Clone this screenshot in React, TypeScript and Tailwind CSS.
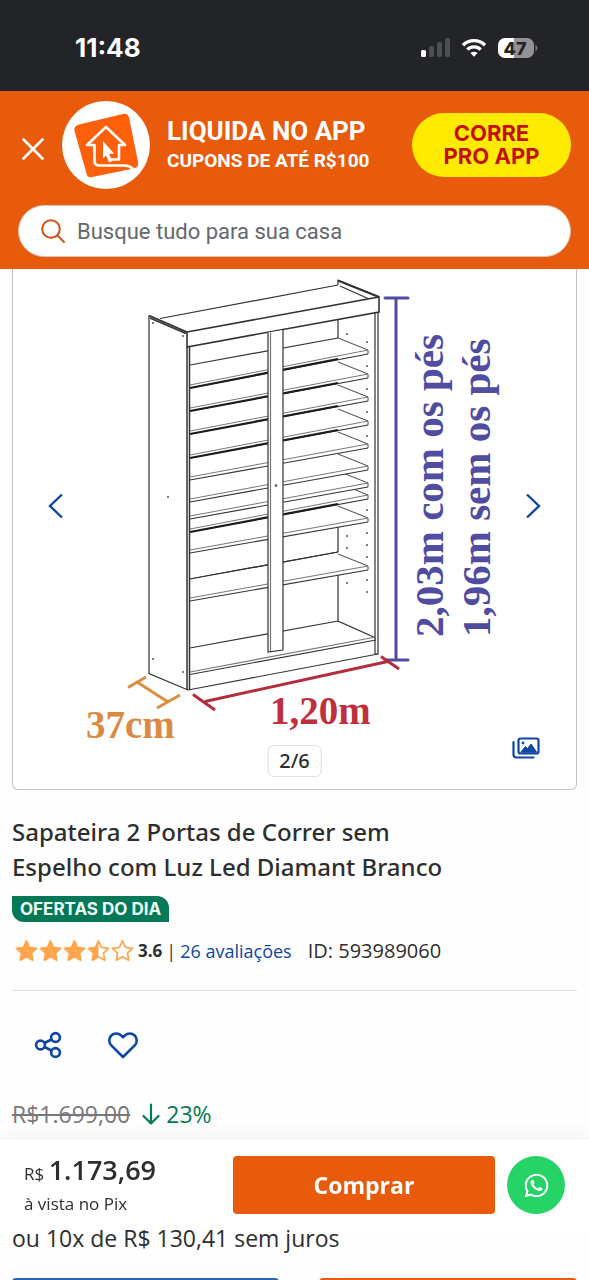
import React, { useState } from 'react';
import { FaWhatsapp } from 'react-icons/fa';

interface Shelf {
  right: number;
  left: number;
  dark?: boolean;
}

// y of the front edge's lower line at both ends, lowest shelf first so upper ones cover it
const shelves: Shelf[] = [
  { right: 570, left: 601 },
  { right: 522, left: 553 },
  { right: 499, left: 532, dark: true },
  { right: 487, left: 519 },
  { right: 470, left: 502 },
  { right: 448, left: 480 },
  { right: 425, left: 458, dark: true },
  { right: 401, left: 434, dark: true },
  { right: 378, left: 411, dark: true },
  { right: 354, left: 388, dark: true }
];

const holes: [number, number][] = [
  [153, 323], [183, 336], [168, 497], [153, 659], [183, 672],
  [347, 334], [367, 342], [367, 366], [367, 389], [367, 412], [367, 436],
  [367, 510], [367, 533], [367, 545], [367, 557], [367, 580], [367, 592],
  [347, 536], [347, 548], [347, 583]
];

const starPath = 'M12 1.5l3.2 6.7 7.3 1-5.3 5.1 1.3 7.3L12 18.1l-6.5 3.5 1.3-7.3L1.5 9.2l7.3-1z';

const StatusBar: React.FC = () => (
  <div className="flex items-start justify-between bg-[#232428] pt-8 pb-[27px] pl-[75px] pr-[51px]">
    <span className="font-['Inter',sans-serif] text-[26px] leading-8 font-bold text-white">11:48</span>
    <div className="flex h-8 items-center gap-[10px]">
      <svg width="30" height="20" viewBox="0 0 30 20">
        <rect x="0" y="12" width="5" height="7" rx="1.5" fill="#fff" />
        <rect x="8" y="8" width="5" height="11" rx="1.5" fill="#4d4e51" />
        <rect x="16" y="4" width="5" height="15" rx="1.5" fill="#4d4e51" />
        <rect x="24" y="0" width="5" height="19" rx="1.5" fill="#4d4e51" />
      </svg>
      <svg width="26" height="20" viewBox="0 0 26 20" fill="none" stroke="#fff" strokeWidth="3.4">
        <path d="M2 7.2a15.5 15.5 0 0 1 22 0" />
        <path d="M6.3 11.6a9.5 9.5 0 0 1 13.4 0" />
        <path d="M13 18.8l-3.6-3.7a5.2 5.2 0 0 1 7.2 0z" fill="#fff" stroke="none" />
      </svg>
      <svg width="41" height="22" viewBox="0 0 41 22">
        <path d="M8 1h9v20H8a7 7 0 0 1-7-7V8a7 7 0 0 1 7-7z" fill="#fff" />
        <path d="M17 1h13a7 7 0 0 1 7 7v6a7 7 0 0 1-7 7H17z" fill="#929295" />
        <path d="M38.500 7.500q2 1.500 2 3.500t-2 3.500z" fill="#77787a" />
        <text x="18" y="17.500" textAnchor="middle" className="fill-[#232428] font-['Inter',sans-serif] text-[18px] font-extrabold">47</text>
      </svg>
    </div>
  </div>
);

const AppLogo: React.FC = () => (
  <svg className="shrink-0" width="88" height="88" viewBox="0 0 88 88" fill="none">
    <circle cx="44" cy="44" r="44" fill="#fff" />
    <path d="M17 23.500L61 13q4.500-1 6 3.500L76 61q1 5-4 6.500L30 76q-4.500 1-5.500-3.500L12.500 30q-1-5 4.500-6.500z" fill="#fe5f0a" />
    <g stroke="#fff" strokeWidth="2.600" strokeLinejoin="round" strokeLinecap="round">
      <path d="M32 44h-7l19-18 19 18h-6v14.500h-8" />
      <path d="M32.500 44v16q0 4.500 5 4.500h25q5 0 8 3" />
    </g>
    <path d="M41 40l11 12.500-5 .500 3.500 7-3.500 1.500-3-7-3 3z" fill="#fff" />
  </svg>
);

const CabinetDrawing: React.FC = () => (
  <svg className="block w-full" viewBox="13 269 563 520" fill="none" role="img" aria-label="Medidas da sapateira">
    <g stroke="#333" strokeWidth="1.200">
      {/* side panel and top */}
      <path d="M149 315.500V673.500L188 690" />
      <path d="M149 315.500L187 332M150 318l36 15.500" strokeWidth="1.600" />
      <path d="M160 318.500L338 285M338 285v-4.500L379 297M340 286l28 12.500" />
      <path d="M338 280.500L379 297" strokeWidth="2.200" />
      <path d="M375 313V654M378 312V654h-3" />
      {/* back wall */}
      <path d="M190 579L338 552M190 648L338 621" />
      <path d="M338 320v18M338 520v32M338 566v55l38 17" />
      {shelves.map((shelf) => (
        <g key={shelf.right}>
          <path d={`M190 ${shelf.left - 22}L338 ${shelf.right - 16}L368 ${shelf.right - 4}v4L190 ${shelf.left}z`} fill="#fff" stroke="none" />
          <path d={`M338 ${shelf.right - 16}L368 ${shelf.right - 4}v4`} strokeWidth="0.900" />
          <path d={`M190 ${shelf.left - 3}L368 ${shelf.right - 4}`} stroke="#777" strokeWidth="1" />
          <path d={`M190 ${shelf.left}L368 ${shelf.right}`} />
          {shelf.dark && <path d={`M190 ${shelf.left}L338 ${shelf.right + 5}`} stroke="#1c1c1c" strokeWidth="2.200" />}
        </g>
      ))}
      <path d="M190 365L338 338M190 579L338 552" />
      <path d="M187 347V690M189.500 347V690" strokeWidth="1.500" />
      {/* base */}
      <path d="M190 672L376 637" stroke="#777" />
      <path d="M190 674.500L376 640M188 690L378 654" />
      {/* front rail and centre post */}
      <path d="M187 332L379 297v15L187 347z" fill="#fff" strokeWidth="1.600" />
      <path d="M268 332.500V652l15-2V330" fill="#fff" />
      <path d="M270.500 332.500V651" stroke="#777" />
    </g>
    <g fill="#555">
      {holes.map(([x, y]) => <circle key={`${x}-${y}`} cx={x} cy={y} r="1" />)}
      <circle cx="276" cy="485.500" r="1.300" />
    </g>
    <path d="M396 298V660M385 298h23M385 660h23" stroke="#504c9f" strokeWidth="3" strokeLinecap="round" />
    <path d="M205 701.500L390 661M193 694.500l22 15.500M381 656.500l18 12.500" stroke="#b32d3f" strokeWidth="3" />
    <path d="M137 682l31 20M128 687.500l18-10.500M157 708l23-13" stroke="#d98f3f" strokeWidth="3" />
    <g className="font-['Liberation_Serif',serif] font-bold">
      <text x="86" y="738" className="fill-[#d98b45] text-[39px]">37cm</text>
      <text x="270" y="724" className="fill-[#c0303c] text-[39px]">1,20m</text>
      <text transform="translate(443 637) rotate(-90)" className="fill-[#504c9f] text-[41px]">2,03m com os pés</text>
      <text transform="translate(490 637) rotate(-90)" className="fill-[#504c9f] text-[41px]">1,96m sem os pés</text>
    </g>
  </svg>
);

const Stars: React.FC = () => (
  <span className="flex" role="img" aria-label="3.6 de 5 estrelas">
    {[1, 1, 1, 0.5, 0].map((amount, index) => (
      <svg key={index} width="23" height="24" viewBox="0 0 24 24" className="mr-px">
        <path d={starPath} fill="none" stroke="#fda64f" strokeWidth="1.800" strokeLinejoin="round" />
        {amount === 1 && <path d={starPath} fill="#fda64f" />}
        {amount === 0.5 && <path d="M12 1.500v16.600l-6.500 3.500 1.300-7.300L1.500 9.200l7.300-1z" fill="#fda64f" />}
      </svg>
    ))}
  </span>
);

export default function App() {
  const [search, setSearch] = useState('');

  return (
    <div className="h-screen overflow-hidden bg-[#fefefe] font-['Open_Sans',sans-serif] text-[#2d2e30]">
      <StatusBar />

      {/* App banner and search */}
      <header className="bg-[#e85b0c] pt-[10px] pb-3">
        <div className="flex items-center pl-[22px] pr-[18px]">
          <button aria-label="Fechar" className="mr-[18px] mt-2 shrink-0">
            <svg width="22" height="22" viewBox="0 0 22 22" stroke="#fff" strokeWidth="2.600" strokeLinecap="round">
              <path d="M1.500 1.500l19 19M20.500 1.500l-19 19" />
            </svg>
          </button>
          <AppLogo />
          <div className="ml-[17px] flex-1 font-['Roboto',sans-serif] font-bold whitespace-nowrap text-white">
            <p className="text-[26px] leading-8">LIQUIDA NO APP</p>
            <p className="text-[19px] leading-7">CUPONS DE ATÉ R$100</p>
          </div>
          <button className="w-[159px] shrink-0 rounded-full bg-[#ffeb00] py-[9px] font-['Inter',sans-serif] text-[22px] leading-[23px] font-bold text-[#c4100c]">
            <span className="block">CORRE</span>
            <span className="block">PRO APP</span>
          </button>
        </div>
        <label className="mx-[18px] mt-4 flex h-[52px] items-center rounded-full border border-[#d9c3b4] bg-white pl-[22px] pr-6">
          <svg className="shrink-0" width="24" height="24" viewBox="0 0 24 24" fill="none" stroke="#d4531a" strokeWidth="2" strokeLinecap="round">
            <circle cx="10" cy="10" r="8.800" />
            <path d="M16.500 16.500l6.500 6.500" />
          </svg>
          <input
            type="text"
            aria-label="Buscar"
            value={search}
            onChange={(e) => setSearch(e.target.value)}
            placeholder="Busque tudo para sua casa"
            className="ml-3 min-w-0 flex-1 font-['Roboto',sans-serif] text-[22px] outline-none placeholder:text-[#65686d]"
          />
        </label>
      </header>

      <main>
        {/* Gallery */}
        <section className="relative mx-3 rounded-b-md border border-t-0 border-[#c4c4c6] bg-white">
          <CabinetDrawing />
          <button aria-label="Imagem anterior" className="absolute top-[223px] left-[34px]">
            <svg width="18" height="28" viewBox="0 0 18 28" fill="none" stroke="#0d47a1" strokeWidth="2.400">
              <path d="M15 2.500L3 14l12 11.500" />
            </svg>
          </button>
          <button aria-label="Próxima imagem" className="absolute top-[223px] right-[34px]">
            <svg width="18" height="28" viewBox="0 0 18 28" fill="none" stroke="#0d47a1" strokeWidth="2.400">
              <path d="M3 2.500L15 14 3 25.500" />
            </svg>
          </button>
          <span className="absolute bottom-3 left-1/2 -translate-x-1/2 rounded-md border border-[#dedee0] bg-white px-[11px] font-['Noto_Sans',sans-serif] text-[20px] leading-[30px] font-medium">2/6</span>
          <button aria-label="Ver galeria" className="absolute right-9 bottom-[29px]">
            <svg width="28" height="24" viewBox="0 0 28 24" fill="none" stroke="#0d47a1" strokeWidth="2.200" strokeLinecap="round" strokeLinejoin="round">
              <rect x="6.500" y="2.500" width="20" height="15" rx="2" />
              <path d="M1.500 6v12.500q0 3 3 3H21.500" />
              <path d="M9 16l4.500-5.500 2 2L19 8l5.500 8z" fill="#0d47a1" strokeWidth="1" />
              <circle cx="11" cy="7" r="1.400" fill="#0d47a1" stroke="none" />
            </svg>
          </button>
        </section>

        {/* Product info */}
        <section className="px-3 pt-6">
          <h1 className="max-w-[460px] font-['Noto_Sans',sans-serif] text-[24px] leading-[35px] font-medium">
            Sapateira 2 Portas de Correr sem Espelho com Luz Led Diamant Branco
          </h1>
          <span className="mt-3 block w-fit rounded-tr-xl rounded-bl-xl bg-[#047857] px-2 font-['Inter',sans-serif] text-[17px] leading-[26px] font-bold text-[#effff8]">
            OFERTAS DO DIA
          </span>
          <div className="flex items-center border-b border-[#e2e2e4] pt-[14px] pb-6 pl-[3px] leading-[30px]">
            <Stars />
            <strong className="ml-[3px] text-[17px] font-bold">3.6</strong>
            <span className="mx-1 text-[18px]">|</span>
            <a href="#avaliacoes" className="text-[18px] text-[#0d47a1]">26 avaliações</a>
            <span className="ml-4 text-[20px]">ID: 593989060</span>
          </div>
          <div className="flex items-center gap-[46px] px-[22px] pt-10">
            <button aria-label="Compartilhar">
              <svg width="28" height="28" viewBox="0 0 28 28" fill="none" stroke="#0d47a1" strokeWidth="2.600">
                <circle cx="6.500" cy="14" r="4.400" />
                <circle cx="21.500" cy="6.500" r="4.400" />
                <circle cx="21.500" cy="21.500" r="4.400" />
                <path d="M10.500 12l7-3.500M10.500 16l7 3.500" />
              </svg>
            </button>
            <button aria-label="Favoritar">
              <svg width="30" height="28" viewBox="0 0 30 28" fill="none" stroke="#0d47a1" strokeWidth="2.600" strokeLinejoin="round">
                <path d="M15 26L3.300 14.300a7 7 0 0 1 0-9.800 7 7 0 0 1 9.900 0L15 6.200l1.800-1.700a7 7 0 0 1 9.900 0 7 7 0 0 1 0 9.800z" />
              </svg>
            </button>
          </div>
          <div className="mt-[39px] flex items-center pb-[10px] text-[23px] leading-8">
            <s className="text-[#77787b]">R$1.699,00</s>
            <svg className="mr-[6px] ml-3" width="18" height="22" viewBox="0 0 18 22" fill="none" stroke="#047857" strokeWidth="2.200" strokeLinecap="round" strokeLinejoin="round">
              <path d="M9 1.500v19M1.500 13L9 20.500l7.500-7.500" />
            </svg>
            <span className="text-[#047857]">23%</span>
          </div>
        </section>

        {/* Buy bar */}
        <div className="sticky bottom-[50px] z-10 flex items-center bg-white py-4 pr-6 pl-6 shadow-[0_-10px_12px_rgba(0,0,0,0.03)]">
          <div className="flex h-[58px] w-[209px] shrink-0 flex-col justify-between">
            <p className="text-[17px] leading-7">R$ <strong className="text-[27px] font-semibold">1.173,69</strong></p>
            <p className="text-[17px] leading-5">à vista no Pix</p>
          </div>
          <button className="h-[58px] flex-1 rounded bg-[#e85b0c] text-[23px] font-bold text-white">Comprar</button>
          <button aria-label="Falar no WhatsApp" className="ml-3 flex size-[58px] shrink-0 items-center justify-center rounded-full bg-[#25d366] text-[27px] text-white">
            <FaWhatsapp />
          </button>
        </div>

        <section className="-mt-2 px-3">
          <p className="text-[23px] leading-8">ou 10x de R$ 130,41 sem juros</p>
          <div className="mt-6 flex gap-10">
            <button aria-label="Formas de pagamento" className="h-[58px] w-[267px] shrink-0 rounded border-2 border-[#2f62b4] bg-white" />
            <button aria-label="Comprar agora" className="h-[58px] flex-1 rounded bg-[#e85b0c]" />
          </div>
        </section>
      </main>
    </div>
  );
}
